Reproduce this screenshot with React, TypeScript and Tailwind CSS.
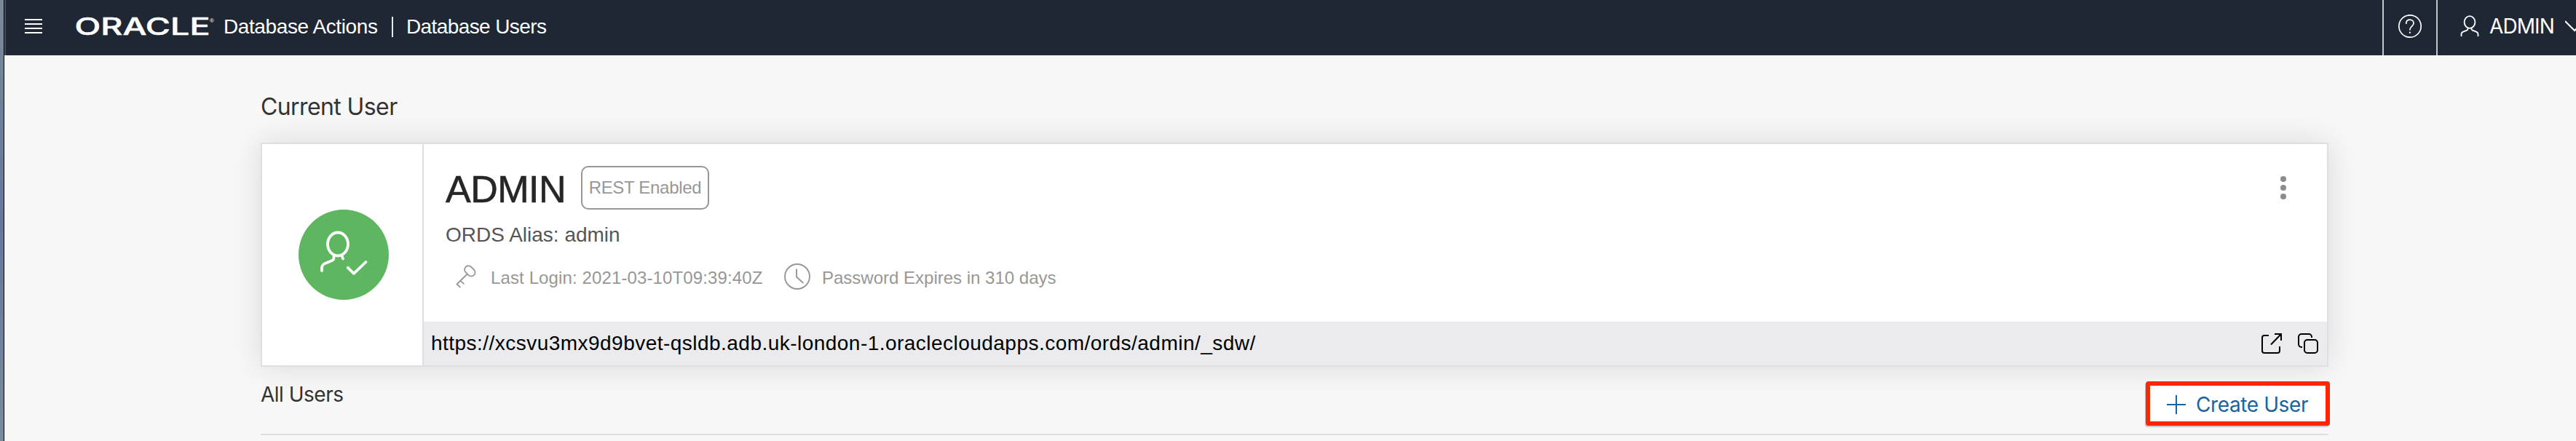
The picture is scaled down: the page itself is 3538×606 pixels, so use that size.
import React from "react";

function MenuIcon() {
  return (
    <svg width="24" height="20" viewBox="0 0 24 20" fill="none" stroke="#fff" strokeWidth="2">
      <path d="M0 1h24M0 7h24M0 13h24M0 19h24" />
    </svg>
  );
}

function Brand() {
  return (
    <svg width="196" height="40" viewBox="-2 -4 196 40" fill="#fff" stroke="#fff" aria-label="Oracle">
      <text x="-1.5" y="27.8" fontFamily="Inter, sans-serif" fontSize="32" strokeWidth="0.5" fontWeight="500" textLength="186" lengthAdjust="spacingAndGlyphs">
        ORACLE
      </text>
      <text x="184" y="11" stroke="none" fontFamily="Liberation Sans, sans-serif" fontSize="8">®</text>
    </svg>
  );
}

function HelpIcon() {
  return (
    <svg width="32" height="32" viewBox="0 0 32 32" fill="none" stroke="#fff" strokeWidth="1.7" strokeLinecap="round" strokeLinejoin="round">
      <circle cx="16" cy="16" r="15.2" />
      <path d="M10.8 12.2c0-3.2 2.2-5 5.1-5s5.1 1.9 5.1 4.7c0 4-5.1 4.400-5.100 8.900" />
      <path d="M15.900 24.600v.3" strokeWidth="2" />
    </svg>
  );
}

function PersonIcon() {
  return (
    <svg className="shrink-0" width="26" height="30" viewBox="0 0 26 30" fill="none" stroke="#fff" strokeWidth="1.800">
      <ellipse cx="13" cy="9.500" rx="7.400" ry="8.400" />
      <path d="M10.500 17.500v1.200c0 1-.5 1.500-1.400 1.900l-5 2C2 23.500 1.500 24.500 1.500 26v3M15.500 17.500v1.200c0 1 .5 1.500 1.400 1.900l5 2c2.100.9 2.600 1.900 2.600 3.400v3" />
    </svg>
  );
}

function UserCheckIcon() {
  return (
    <svg width="124" height="124" viewBox="0 0 124 124" fill="none" stroke="#fff" strokeWidth="3.800" strokeLinecap="round" strokeLinejoin="round">
      <ellipse cx="54" cy="47.500" rx="14" ry="16" />
      <path d="M48.500 64v2.500c0 2-1.200 3-3 3.800l-9 3.600c-3 1.400-4.500 3.300-4.500 6.600V84M60 64.500l1 3" />
      <path d="M67.800 79.800l8.200 8 16.500-15.800" />
    </svg>
  );
}

function KeyIcon() {
  return (
    <svg width="28" height="32" viewBox="0 0 28 32" fill="none" stroke="#979797" strokeWidth="1.800" strokeLinecap="round" strokeLinejoin="round">
      <rect x="11.300" y="3.200" width="16" height="10.500" rx="5.200" transform="rotate(45 19.300 8.450)" />
      <path d="M15.800 12.500L1.500 26.500M1.500 26.500l4.300 4M6.500 21.800l4.300 4" />
    </svg>
  );
}

function ClockIcon() {
  return (
    <svg width="36" height="36" viewBox="0 0 36 36" fill="none" stroke="#979797" strokeWidth="1.900" strokeLinecap="round" strokeLinejoin="round">
      <circle cx="18" cy="18" r="17" />
      <path d="M17 8.200V18.500l8.800 8" />
    </svg>
  );
}

function OpenIcon() {
  return (
    <svg width="28" height="28" viewBox="0 0 28 28" fill="none" stroke="#000" strokeWidth="2">
      <path d="M10 3H4a3 3 0 0 0-3 3v18a3 3 0 0 0 3 3h18a3 3 0 0 0 3-3v-6" />
      <path d="M18 1h9v9M27 1L13 15.500" />
    </svg>
  );
}

function CopyIcon() {
  return (
    <svg width="28" height="28" viewBox="0 0 28 28" fill="none" stroke="#000" strokeWidth="2">
      <rect x="9" y="9" width="18" height="18" rx="4" />
      <path d="M6 19H5a4 4 0 0 1-4-4V5a4 4 0 0 1 4-4h10a4 4 0 0 1 4 4v1" />
    </svg>
  );
}

export default function App() {
  return (
    <div className="flex h-[606px] w-[3538px] overflow-hidden bg-[#f7f7f7] font-['Liberation_Sans',sans-serif]">
      <div className="w-[6px] shrink-0 border-r border-black bg-linear-to-b from-[#7c8997] via-[#66779a] to-[#7b8a9b]" />
      <div className="flex min-w-0 flex-1 flex-col">
        <header className="flex h-[76px] shrink-0 items-stretch border-l-2 border-[#464e58] bg-[#1e2733] text-white">
          <div className="flex flex-1 items-center pb-1 pl-[26px] text-[28px]">
            <MenuIcon />
            <div className="ml-[44px] w-[205px]"><Brand /></div>
            <span className="w-[231px] whitespace-nowrap pt-[2px] leading-10 tracking-[-0.4px]">Database Actions</span>
            <span className="mt-[2px] h-7 w-[2px] bg-white/90" />
            <span className="ml-[18px] whitespace-nowrap pt-[2px] leading-10 tracking-[-0.6px]">Database Users</span>
          </div>
          <div className="flex w-[76px] items-center justify-center border-x-2 border-[#c4c7ca] pb-1">
            <HelpIcon />
          </div>
          <div className="flex w-[190px] shrink-0 items-center pb-1 pl-[31px]">
            <PersonIcon />
            <span className="ml-[14px] w-[104px] shrink-0 font-['Inter',sans-serif] text-[28px] leading-10 tracking-[-0.9px]">ADMIN</span>
            <svg className="shrink-0" width="28" height="16" viewBox="0 0 28 16" fill="none" stroke="#fff" strokeWidth="2">
              <path d="M0 1l13 13L26 1" />
            </svg>
          </div>
        </header>

        <main className="ml-[352px] flex w-[2840px] flex-col">
          <h2 className="mt-[51px] h-10 font-['Inter',sans-serif] text-[32px] leading-10 tracking-[-0.6px] text-[#333]">Current User</h2>
          <section className="mt-[29px] flex h-[308px] shrink-0 border-2 border-[#dfdfdf] bg-white shadow-[0_0_40px_rgba(0,0,0,0.12)]">
            <div className="flex w-[222px] shrink-0 items-center justify-center border-r-2 border-[#dfdfdf] pl-1">
              <div className="h-[124px] w-[124px] rounded-full bg-[#5eb760]"><UserCheckIcon /></div>
            </div>
            <div className="flex min-w-0 flex-1 flex-col">
              <div className="mt-[30px] flex h-[60px] items-center pl-[30px]">
                <h1 className="w-[186px] pt-1 text-[52px] leading-[60px] tracking-[-0.5px] text-[#262626] [-webkit-text-stroke:0.6px_#262626]">ADMIN</h1>
                <span className="flex h-[60px] w-[176px] items-center justify-center whitespace-nowrap rounded-[10px] border-2 border-[#979797] text-[24px] tracking-[-0.3px] text-[#979797]">REST Enabled</span>
                <svg className="ml-auto mr-[56px]" width="8" height="32" viewBox="0 0 8 32" fill="#898d90">
                  <circle cx="4" cy="4" r="4" /><circle cx="4" cy="16" r="4" /><circle cx="4" cy="28" r="4" />
                </svg>
              </div>
              <p className="mt-[15px] h-10 pl-[30px] text-[28px] leading-10 text-[#565656]">ORDS Alias: admin</p>
              <div className="mt-[17px] flex h-10 items-center pl-[44px] text-[24px] text-[#979797]">
                <KeyIcon />
                <span className="ml-[20px] w-[403px] whitespace-nowrap pt-[3px] tracking-[0.12px]">Last Login: 2021-03-10T09:39:40Z</span>
                <ClockIcon />
                <span className="ml-4 whitespace-nowrap pt-[3px]">Password Expires in 310 days</span>
              </div>
              <div className="mt-auto flex h-[60px] items-center bg-[#ebebed] pl-[10px] pr-3 text-[28px] text-black">
                <span className="flex-1 whitespace-nowrap leading-10 tracking-[0.47px]">https://xcsvu3mx9d9bvet-qsldb.adb.uk-london-1.oraclecloudapps.com/ords/admin/_sdw/</span>
                <div className="flex gap-[22px]"><OpenIcon /><CopyIcon /></div>
              </div>
            </div>
          </section>
          <div className="flex h-[94px] shrink-0 justify-between border-b-2 border-[#dfdfdf] font-['Inter',sans-serif] text-[28px]">
            <h3 className="pt-[18px] leading-10 tracking-[-0.5px] text-[#333]">All Users</h3>
            <button className="-mr-[2px] mt-5 flex h-[61px] w-[253px] items-center rounded-[4px] border-[6px] border-[#ff2600] bg-white pl-[23px] pt-[3px] text-[#1a639f] shadow-[-1px_2px_1px_#c8c8c8]">
              <svg width="26" height="26" viewBox="0 0 26 26" stroke="#1a639f" strokeWidth="2"><path d="M0 13h26M13 0v26" /></svg>
              <span className="ml-[14px] whitespace-nowrap leading-10 tracking-[-0.4px]">Create User</span>
            </button>
          </div>
        </main>
      </div>
    </div>
  );
}
